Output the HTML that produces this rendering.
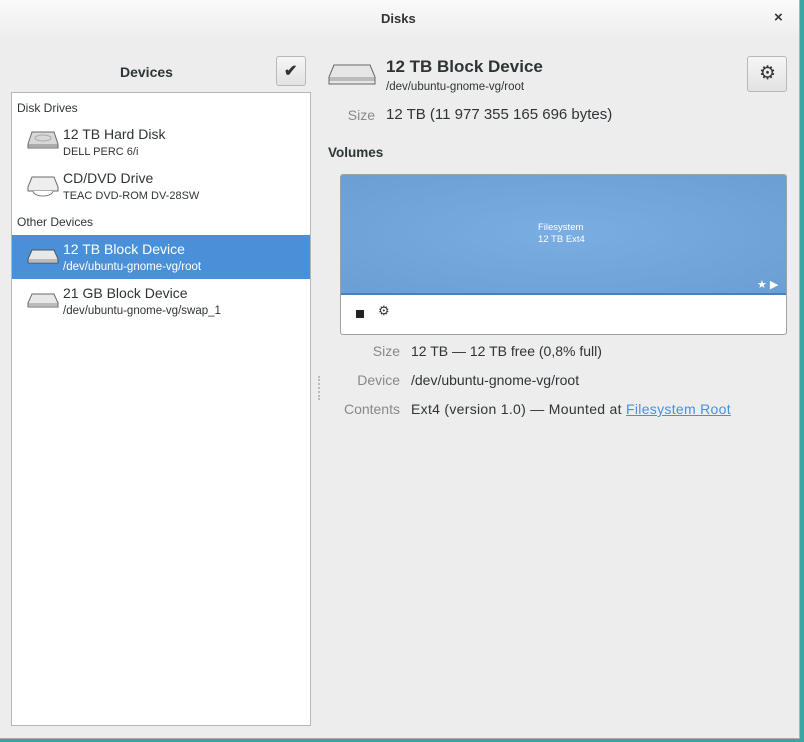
<!DOCTYPE html>
<html><head><meta charset="utf-8"><style>
*{margin:0;padding:0;box-sizing:border-box}
body{width:804px;height:742px;background:#3aa6a4;position:relative;overflow:hidden;font-family:"Liberation Sans",sans-serif;color:#2e3436}
.win{position:absolute;left:0;top:0;width:800px;height:739px;background:#ededed;border-right:1px solid #b0b0b0;border-bottom:1px solid #a8a8a8}
.tb{position:absolute;left:0;top:0;width:799px;height:40px;background:linear-gradient(#fafafa,#ededed)}
.a{position:absolute;white-space:nowrap}
.list{position:absolute;left:11px;top:92px;width:300px;height:634px;background:#fff;border:1px solid #b6b6b6}
.btn{position:absolute;border:1px solid #b8b8b8;border-radius:3px;background:linear-gradient(#f6f6f6,#e2e2e2)}
.t1{font-size:14px}.t2{font-size:11.5px}
.lbl{color:#888;font-size:14px;text-align:right;width:80px}
.v{font-size:14px}
</style></head><body>
<div class="win">
<div class="tb"></div>
<div class="a" style="left:381px;top:11px;font-size:13px;font-weight:bold;color:#333">Disks</div>
<div class="a" style="left:774px;top:9px;font-size:15px;font-weight:bold;color:#333">×</div>
<div class="a" style="left:120px;top:64px;font-size:14px;font-weight:bold">Devices</div>
<div class="btn" style="left:276px;top:56px;width:30px;height:30px"><div class="a" style="left:7px;top:4px;font-size:16px;font-weight:bold;color:#333">✔</div></div>
<div class="list">
<div class="a" style="left:5px;top:8px;font-size:12px">Disk Drives</div>
<svg class="a" style="left:15px;top:37px" width="32" height="20"><path d="M5 2h22l4 12v4H1v-4z" fill="#d8d8d8" stroke="#6a6a6a"/><ellipse cx="16" cy="8" rx="8" ry="3" fill="none" stroke="#aaa"/><rect x="1.5" y="14" width="29" height="3" fill="#aaa"/></svg>
<div class="a t1" style="left:51px;top:33px">12 TB Hard Disk</div>
<div class="a" style="left:51px;top:53px;font-size:11px">DELL PERC 6/i</div>
<svg class="a" style="left:15px;top:82px" width="32" height="22"><path d="M5 2h22l4 10v4H1v-4z" fill="#eee" stroke="#6a6a6a"/><path d="M6 16a10 5 0 0 0 20 0" fill="#fff" stroke="#777"/></svg>
<div class="a t1" style="left:51px;top:77px">CD/DVD Drive</div>
<div class="a" style="left:51px;top:97px;font-size:11px">TEAC DVD-ROM DV-28SW</div>
<div class="a" style="left:5px;top:122px;font-size:12px">Other Devices</div>
<div class="a" style="left:0;top:142px;width:298px;height:44px;background:#4a90d9"></div>
<svg class="a" style="left:15px;top:155px" width="32" height="18"><path d="M5 2h22l4 9v4H1v-4z" fill="#e8e8e8" stroke="#555"/><rect x="1.5" y="11" width="29" height="3" fill="#bbb"/></svg>
<div class="a t1" style="left:51px;top:148px;color:#fff">12 TB Block Device</div>
<div class="a t2" style="left:51px;top:168px;color:#fff">/dev/ubuntu-gnome-vg/root</div>
<svg class="a" style="left:15px;top:199px" width="32" height="18"><path d="M5 2h22l4 9v4H1v-4z" fill="#e8e8e8" stroke="#6a6a6a"/><rect x="1.5" y="11" width="29" height="3" fill="#bbb"/></svg>
<div class="a t1" style="left:51px;top:192px">21 GB Block Device</div>
<div class="a t2" style="left:51px;top:212px">/dev/ubuntu-gnome-vg/swap_1</div>
</div>
<svg class="a" style="left:328px;top:63px" width="48" height="24"><path d="M6 2h36l5 12v7H1v-7z" fill="#e6e6e6" stroke="#666"/><rect x="1.5" y="14" width="45" height="4" fill="#bbb"/></svg>
<div class="a" style="left:386px;top:57px;font-size:17px;font-weight:bold">12 TB Block Device</div>
<div class="a t2" style="left:386px;top:81px">/dev/ubuntu-gnome-vg/root</div>
<div class="btn" style="left:747px;top:56px;width:40px;height:36px"><div class="a" style="left:11px;top:5px;font-size:19px;color:#333">⚙</div></div>
<div class="a lbl" style="left:295px;top:107px">Size</div>
<div class="a" style="left:386px;top:106px;font-size:15px">12 TB (11 977 355 165 696 bytes)</div>
<div class="a" style="left:328px;top:145px;font-size:13.5px;font-weight:bold">Volumes</div>
<div class="a" style="left:340px;top:174px;width:447px;height:161px;border:1px solid #a0a0a0;border-radius:3px;background:#fff;overflow:hidden">
<div class="a" style="left:0;top:0;width:445px;height:120px;background:radial-gradient(ellipse at center,#7aaee2,#6b9ed3);border-bottom:2px solid #4a80c0"></div>
<div class="a" style="left:197px;top:47px;font-size:9.5px;color:#fff;line-height:12px">Filesystem<br>12 TB Ext4</div>
<div class="a" style="left:416px;top:103px;font-size:11px;color:#fff">★ ▶</div>
<div class="a" style="left:15px;top:135px;width:8px;height:8px;background:#222"></div>
<div class="a" style="left:37px;top:128px;font-size:13px;color:#333">⚙</div>
</div>
<div class="a lbl" style="left:320px;top:343px">Size</div>
<div class="a v" style="left:411px;top:343px">12 TB — 12 TB free (0,8% full)</div>
<div class="a lbl" style="left:320px;top:372px">Device</div>
<div class="a v" style="left:411px;top:372px">/dev/ubuntu-gnome-vg/root</div>
<div class="a lbl" style="left:320px;top:401px">Contents</div>
<div class="a v" style="left:411px;top:401px;letter-spacing:0.3px">Ext4 (version 1.0) — Mounted at <span style="color:#4a90d9;text-decoration:underline">Filesystem Root</span></div>
<div class="a" style="left:318px;top:376px;width:2px;height:24px;border-left:2px dotted #bbb"></div>
</div>
</body></html>
